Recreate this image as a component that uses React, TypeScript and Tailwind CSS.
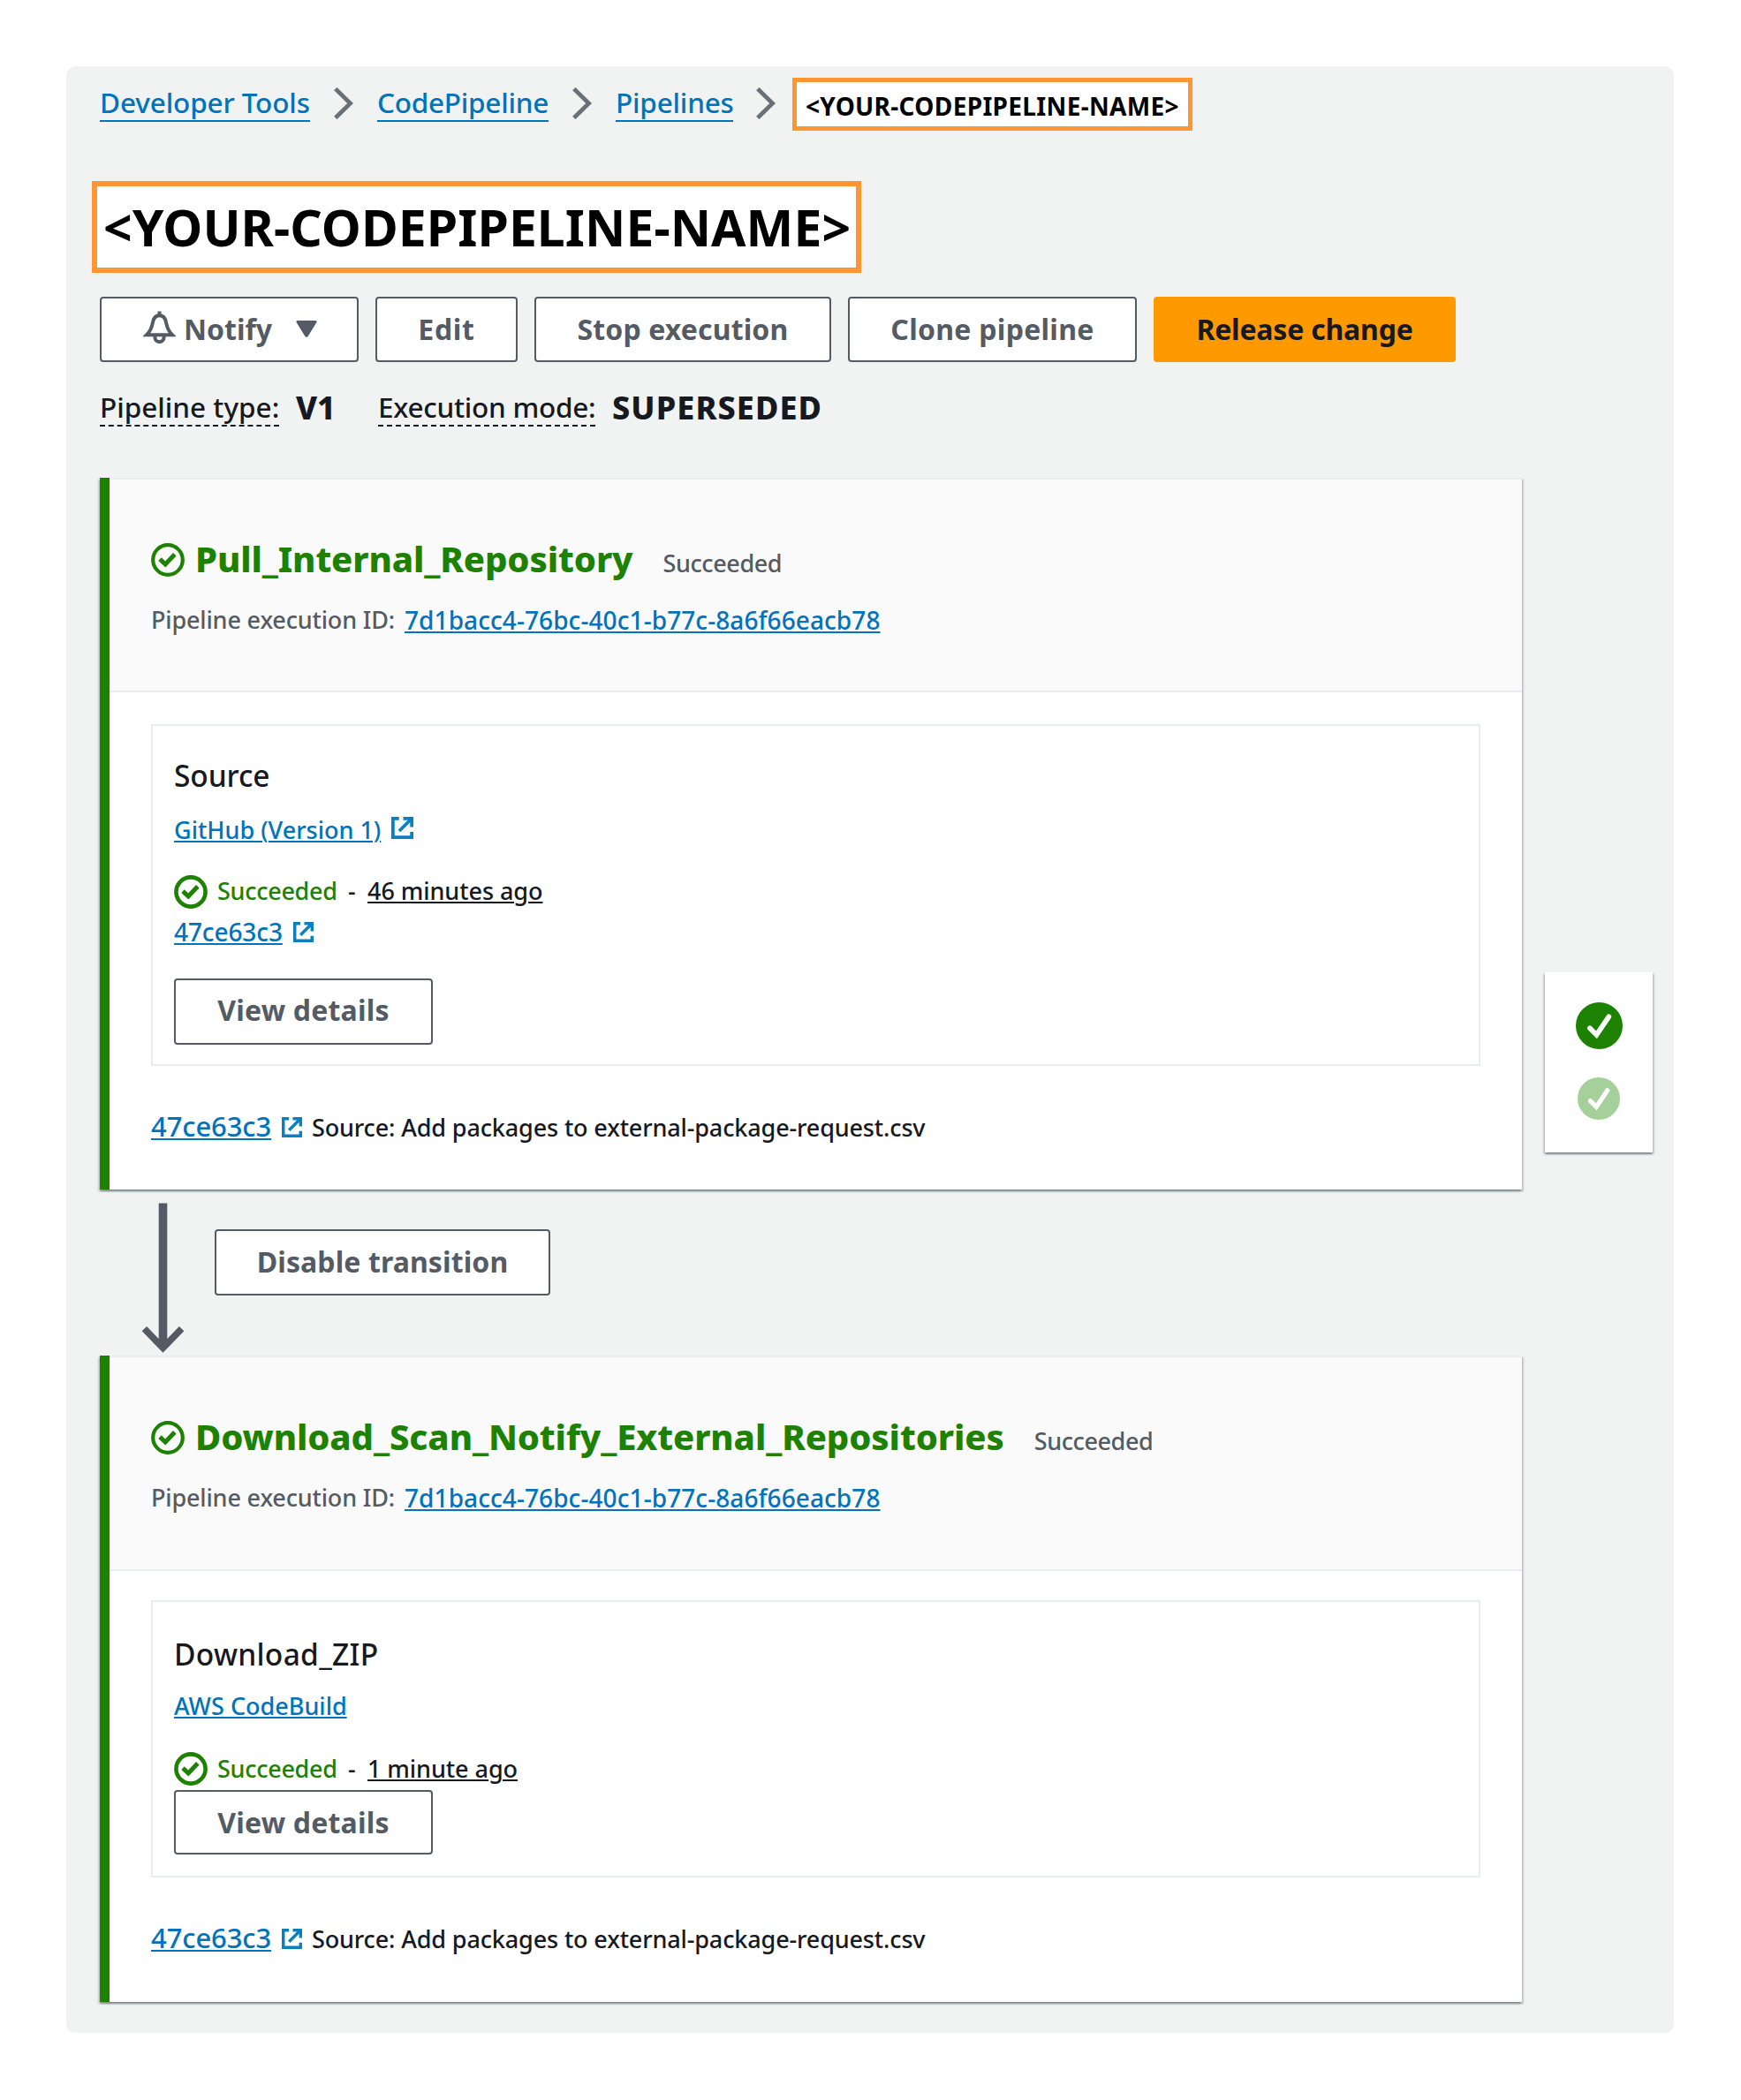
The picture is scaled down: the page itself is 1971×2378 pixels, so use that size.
import React from "react";

const LINK = "text-[#0073bb] underline decoration-2 underline-offset-[2px]";
const SHADOW =
  "shadow-[0_2px_2px_0_rgba(0,28,36,0.3),2px_2px_2px_0_rgba(0,28,36,0.15),-2px_2px_2px_0_rgba(0,28,36,0.15)]";

function Crumb({ children, className = "" }: { children: string; className?: string }) {
  return (
    <a className={`mt-[8px] block h-[42px] whitespace-nowrap border-b-2 border-[#0073bb] text-[31.5px] leading-[40px] text-[#0073bb] ${className}`}>
      {children}
    </a>
  );
}

function CrumbChevron({ className = "" }: { className?: string }) {
  return (
    <svg className={`mt-[11px] h-[36px] w-[22px] shrink-0 ${className}`} viewBox="0 0 22 36" fill="none" stroke="#687078" strokeWidth="4.8">
      <path d="M1.8 1.6 L18.6 18 L1.8 34.4" />
    </svg>
  );
}

const BUTTON =
  "flex shrink-0 items-center whitespace-nowrap rounded-[4px] border-2 text-[32px] font-bold leading-[40px]";

function Button({ children, className = "" }: { children: React.ReactNode; className?: string }) {
  return (
    <button className={`${BUTTON} justify-center border-[#545b64] bg-white text-[#545b64] ${className}`}>
      {children}
    </button>
  );
}

function BellIcon() {
  return (
    <svg className="-mt-[5px] h-[37px] w-[37px] shrink-0" viewBox="0 0 37 37" fill="none" stroke="#545b64" strokeWidth="4">
      <path d="M18.5 0.5 V5" />
      <path d="M4 27.2 C9 22.5 10 18.5 11 13 C12 7.5 14.5 5.2 18.5 5.2 C22.5 5.2 25 7.5 26 13 C27 18.5 28 22.5 33 27.2 Z" />
      <path d="M13.4 28 V30 A5.1 5.1 0 0 0 23.6 30 V28" />
    </svg>
  );
}

function CheckCircle({ className = "", heavy = false }: { className?: string; heavy?: boolean }) {
  return (
    <svg className={`h-[38px] w-[38px] shrink-0 ${className}`} viewBox="0 0 38 38" fill="none" stroke="#1d8102">
      <circle cx="19" cy="19" r={heavy ? 16.6 : 16.8} strokeWidth={heavy ? 4.6 : 4.2} />
      <path d="M10 18.2 L16.2 24 L26.8 12.8" strokeWidth={5} />
    </svg>
  );
}

function SolidCheck({ className = "", color }: { className?: string; color: string }) {
  return (
    <svg className={`shrink-0 ${className}`} viewBox="0 0 52 52" fill="none">
      <circle cx="26" cy="26" r="26" fill={color} />
      <path d="M15.6 28.8 L23 36.2 L36.6 16" stroke="#fff" strokeWidth="5.6" strokeLinecap="round" />
    </svg>
  );
}

function ExternalIcon({ className = "" }: { className?: string }) {
  return (
    <svg className={`shrink-0 ${className}`} viewBox="0 0 24 24" fill="none" stroke="#0a80bf" strokeWidth="3.6">
      <path d="M8.4 1.8 H1.8 V22.2 H22.2 V16.4" />
      <path d="M13 1.8 H22.2 V11" />
      <path d="M21.6 2.4 L8.6 15.4" />
    </svg>
  );
}

function StageHeader({ name, className }: { name: string; className: string }) {
  return (
    <header className={`border-b-2 border-[#eaeded] bg-[#fafafa] pl-[47px] pt-[61px] ${className}`}>
      <div className="flex h-[56px]">
        <CheckCircle className="mt-[11px]" />
        <h2 className="ml-[12px] whitespace-nowrap pt-px text-[40px] font-extrabold leading-[56px] tracking-[-0.1px] text-[#1d8102]">
          {name}
          <span className="ml-[34px] text-[27px] font-medium tracking-[-0.4px] text-[#545b64]">Succeeded</span>
        </h2>
      </div>
      <div className="mt-[22px] flex text-[27px] leading-[40px]">
        <span className="w-[287px] whitespace-nowrap tracking-[-0.16px] text-[#545b64]">Pipeline execution ID:</span>
        <a className={`text-[28px] tracking-[0.08px] ${LINK}`}>7d1bacc4-76bc-40c1-b77c-8a6f66eacb78</a>
      </div>
    </header>
  );
}

function ActionStatus({ ago, className, iconClass }: { ago: string; className: string; iconClass: string }) {
  return (
    <div className={`flex h-[40px] text-[27px] leading-[42px] text-[#16191f] ${className}`}>
      <CheckCircle heavy className={iconClass} />
      <span className="ml-[11px] w-[136px] tracking-[-0.28px] text-[#1d8102]">Succeeded</span>
      <span className="ml-[12px] w-[9px]">-</span>
      <span className="ml-[13px] whitespace-nowrap tracking-[-0.06px] underline decoration-2 underline-offset-[2px]">{ago}</span>
    </div>
  );
}

function RevisionRow({ className }: { className: string }) {
  return (
    <div className={`flex leading-[40px] ${className}`}>
      <a className={`w-[135px] text-[31px] tracking-[-0.1px] ${LINK}`}>47ce63c3</a>
      <ExternalIcon className="ml-[13px] mt-[10px] h-[23px] w-[23px]" />
      <p className="ml-[11px] mt-[2px] whitespace-nowrap text-[27px] tracking-[-0.14px] text-[#16191f]">
        Source: Add packages to external-package-request.csv
      </p>
    </div>
  );
}

function Stage({ children, className }: { children: React.ReactNode; className: string }) {
  return (
    <section className={`flex bg-white ${SHADOW} ${className}`}>
      <div className="w-[11px] shrink-0 bg-[#1d8102]" />
      <div className="grow border-t-2 border-[#eaeded]">{children}</div>
    </section>
  );
}

export default function App() {
  return (
    <div className="min-h-[2378px] w-[1971px] bg-white p-[75px] font-['Noto_Sans',sans-serif] font-medium">
      <main className="h-[2227px] w-[1820px] rounded-[10px] bg-[#f1f3f3] pl-[38px] pt-[13px]">
        <nav className="flex h-[60px]">
          <Crumb className="w-[238px] tracking-[-0.13px]">Developer Tools</Crumb>
          <CrumbChevron className="ml-[27px]" />
          <Crumb className="ml-[27px] w-[194px] tracking-[-0.25px]">CodePipeline</Crumb>
          <CrumbChevron className="ml-[27px]" />
          <Crumb className="ml-[27px] w-[133px] tracking-[-0.2px]">Pipelines</Crumb>
          <CrumbChevron className="ml-[26px]" />
          <span className="ml-[19px] w-[453px] whitespace-nowrap border-[5px] border-[#ff9632] bg-white pl-[10px] pt-[3px] text-[28px] font-bold leading-[48px] tracking-[0.33px] text-black">
            {"<YOUR-CODEPIPELINE-NAME>"}
          </span>
        </nav>

        <h1 className="-ml-[9px] mt-[57px] h-[104px] w-[871px] whitespace-nowrap border-[6px] border-[#ff9632] bg-white pl-[7px] text-[57px] font-bold leading-[92px] tracking-[0.06px] text-black">
          {"<YOUR-CODEPIPELINE-NAME>"}
        </h1>

        <div className="mt-[27px] flex h-[74px] gap-[19px]">
          <button className={`${BUTTON} w-[293px] border-[#545b64] bg-white pl-[47px] text-[#545b64]`}>
            <BellIcon />
            <span className="ml-[9px]">Notify</span>
            <svg className="ml-[27px] h-[19px] w-[24px] -translate-y-px" viewBox="0 0 24 19" fill="#545b64">
              <path d="M1.5 0 H22.5 Q24 0.4 23.4 2 L13.6 18 Q12 19.6 10.4 18 L0.6 2 Q0 0.4 1.5 0 Z" />
            </svg>
          </button>
          <Button className="w-[161px] tracking-[0.7px]">Edit</Button>
          <Button className="w-[336px] tracking-[0.13px]">Stop execution</Button>
          <Button className="w-[327px] tracking-[0.28px]">Clone pipeline</Button>
          <button className={`${BUTTON} w-[342px] justify-center border-[#ff9900] bg-[#ff9900] tracking-[-0.2px] text-[#16191f]`}>
            Release change
          </button>
        </div>

        <div className="mt-[31px] flex h-[42px] whitespace-nowrap text-[31.5px] leading-[40px] text-[#16191f]">
          <div className="flex w-[315px]">
            <span className="w-[203px] border-b-2 border-dashed border-[#16191f]">Pipeline type:</span>
            <b className="ml-[19px] text-[36px] font-extrabold leading-[42px]">V1</b>
          </div>
          <span className="w-[246px] border-b-2 border-dashed border-[#16191f] tracking-[-0.27px]">Execution mode:</span>
          <b className="ml-[19px] text-[36px] font-extrabold leading-[42px] tracking-[1.1px]">SUPERSEDED</b>
        </div>

        <div className="mt-[58px] flex">
          <div className="w-[1610px]">
            <Stage className="h-[806px]">
              <StageHeader name="Pull_Internal_Repository" className="h-[241px]" />
              <div className="pl-[47px] pt-[36px]">
                <div className="h-[387px] w-[1505px] border-2 border-[#eaeded] pl-[24px] pt-[34px]">
                  <h3 className="text-[33.5px] leading-[44px] text-[#16191f] tracking-[-0.1px]">Source</h3>
                  <div className="mt-[19px] flex h-[40px] text-[27px] leading-[42px]">
                    <a className={LINK}>GitHub (Version 1)</a>
                    <ExternalIcon className="ml-[12px] mt-[6px] h-[25px] w-[25px]" />
                  </div>
                  <ActionStatus ago="46 minutes ago" className="mt-[29px]" iconClass="mt-[3px]" />
                  <div className="mt-[7px] flex h-[40px] text-[28px] leading-[40px]">
                    <a className={`w-[123px] tracking-[-0.1px] ${LINK}`}>47ce63c3</a>
                    <ExternalIcon className="ml-[12px] mt-[9px] h-[23px] w-[23px]" />
                  </div>
                  <Button className="mt-[33px] h-[75px] w-[293px] pb-[3px] tracking-[0.2px]">View details</Button>
                </div>
                <RevisionRow className="mt-[48px]" />
              </div>
            </Stage>

            <div className="flex h-[188px] pl-[47px]">
              <svg className="mt-[15px] h-[172px] w-[50px] shrink-0" viewBox="0 0 50 172" fill="none" stroke="#545b64">
                <path d="M24.5 0.6 V164" strokeWidth="9.6" />
                <path d="M3.4 142.6 L24.5 164.4 L45.6 142.6" strokeWidth="7.6" />
              </svg>
              <Button className="ml-[33px] mt-[45px] h-[75px] w-[380px] pb-[2px] tracking-[0.1px]">Disable transition</Button>
            </div>

            <Stage className="h-[732px]">
              <StageHeader name="Download_Scan_Notify_External_Repositories" className="h-[242px]" />
              <div className="pl-[47px] pt-[33px]">
                <div className="h-[314px] w-[1505px] border-2 border-[#eaeded] pl-[24px] pt-[37px]">
                  <h3 className="text-[33.5px] leading-[44px] tracking-[0.3px] text-[#16191f]">Download_ZIP</h3>
                  <div className="mt-[16px] flex h-[40px] text-[27px] leading-[42px]">
                    <a className={LINK}>AWS CodeBuild</a>
                  </div>
                  <ActionStatus ago="1 minute ago" className="mt-[31px]" iconClass="mt-[2px]" />
                  <Button className="mt-[5px] h-[73px] w-[293px] tracking-[0.2px]">View details</Button>
                </div>
                <RevisionRow className="mt-[48px]" />
              </div>
            </Stage>
          </div>

          <aside className={`ml-[26px] mt-[560px] flex h-[204px] w-[122px] flex-col items-center gap-[32px] bg-white pt-[34px] ${SHADOW}`}>
            <SolidCheck className="h-[53px] w-[53px]" color="#1d8102" />
            <SolidCheck className="h-[48px] w-[48px]" color="#a5d099" />
          </aside>
        </div>
      </main>
    </div>
  );
}
